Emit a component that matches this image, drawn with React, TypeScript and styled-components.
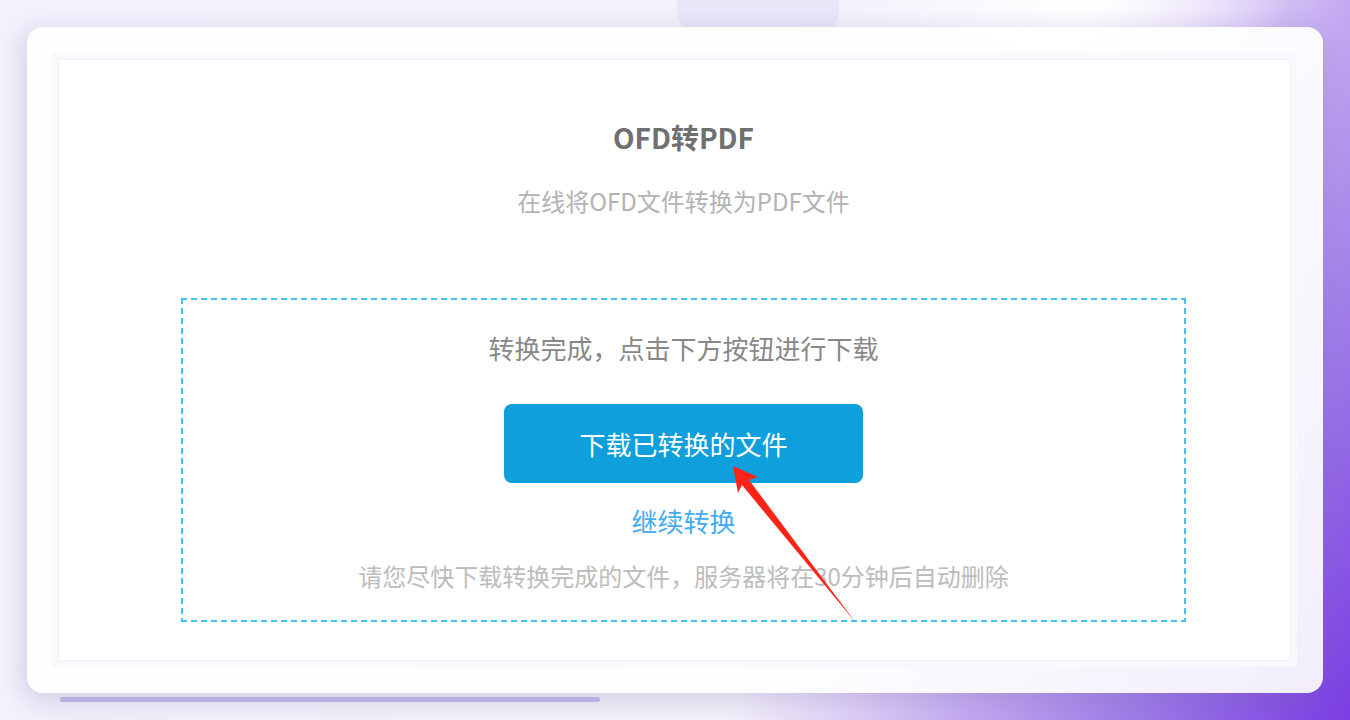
import React from "react";
import styled, { createGlobalStyle } from "styled-components";

const GlobalStyle = createGlobalStyle`
    html, body {
        margin: 0;
        padding: 0;
    }
    body {
        font-family: "Noto Sans CJK SC", "Noto Sans", sans-serif;
        overflow: hidden;
    }
`;

const dashColor = "#40c3fa";

const Page = styled.div`
    position: relative;
    width: 1350px;
    height: 720px;
    overflow: hidden;
    box-sizing: border-box;
    padding: 27px 27px 0 27px;
    background:
        radial-gradient(ellipse 220px 90px at 1070px 0px, rgba(255, 255, 255, 0.95), rgba(255, 255, 255, 0) 100%),
        linear-gradient(118deg, #f3f1fc 0%, #f4f2fb 64%, #e2d6f7 70%, #c3a9f1 78%, #a17fe9 87%, #7a3de3 100%);
`;

const TopPill = styled.div`
    position: absolute;
    left: 677px;
    top: -24px;
    width: 162px;
    height: 62px;
    border-radius: 28px;
    background: #e9e6f8;
`;

const Card = styled.div`
    position: relative;
    height: 666px;
    box-sizing: border-box;
    padding: 26px 26px 26px 25px;
    border-radius: 16px;
    background: linear-gradient(160deg, rgba(255, 255, 255, 0.96) 0%, rgba(255, 255, 255, 0.9) 100%);
    box-shadow: 0 12px 28px rgba(90, 80, 140, 0.14), -6px 0 22px rgba(120, 110, 190, 0.12);
`;

const Frame = styled.div`
    height: 100%;
    box-sizing: border-box;
    padding: 6px;
    background: #f9f8fd;
`;

const Panel = styled.div`
    height: 100%;
    box-sizing: border-box;
    border: 1px solid #f2f1f9;
    background: #ffffff;
    padding: 58px 104px 0 122px;
    display: flex;
    flex-direction: column;
    align-items: center;
`;

const Title = styled.h1`
    margin: 0;
    font-size: 28px;
    line-height: 38px;
    font-weight: 700;
    color: #707070;
`;

const Subtitle = styled.p`
    margin: 27px 0 0;
    font-size: 24px;
    line-height: 36px;
    color: #b3b3b3;
`;

const DropZone = styled.div`
    margin-top: 79px;
    width: 100%;
    height: 324px;
    box-sizing: border-box;
    padding-top: 32px;
    display: flex;
    flex-direction: column;
    align-items: center;
    background-image:
        repeating-linear-gradient(90deg, ${dashColor} 0 6px, transparent 6px 10px),
        repeating-linear-gradient(90deg, ${dashColor} 0 6px, transparent 6px 10px),
        repeating-linear-gradient(180deg, ${dashColor} 0 6px, transparent 6px 10px),
        repeating-linear-gradient(180deg, ${dashColor} 0 6px, transparent 6px 10px);
    background-size: 100% 2px, 100% 2px, 2px 100%, 2px 100%;
    background-position: left top, left bottom, left top, right top;
    background-repeat: no-repeat;
`;

const Status = styled.p`
    margin: 0;
    font-size: 26px;
    line-height: 36px;
    color: #888888;
`;

const DownloadButton = styled.button`
    margin-top: 38px;
    width: 359px;
    height: 79px;
    border: none;
    border-radius: 8px;
    background: #0e9fdc;
    color: #ffffff;
    font-family: inherit;
    font-size: 26px;
    cursor: pointer;
`;

const ContinueLink = styled.a`
    margin-top: 20px;
    font-size: 26px;
    line-height: 36px;
    color: #43acf2;
    text-decoration: none;
    cursor: pointer;
`;

const Note = styled.p`
    margin: 19px 0 0;
    font-size: 24px;
    line-height: 36px;
    color: #bcbcbc;
`;

const BottomBar = styled.div`
    margin: 4px 0 0 33px;
    width: 540px;
    height: 5px;
    border-radius: 2px;
    background: #c3bfec;
`;

const ArrowLayer = styled.svg`
    position: absolute;
    left: 0;
    top: 0;
    pointer-events: none;
`;

const Arrow = () => (
    <ArrowLayer width="1350" height="720" viewBox="0 0 1350 720">
        <polygon
            points="733,466 758,477 749,480 856,623 742,485 738,493"
            fill="#fb2416"
        />
    </ArrowLayer>
);

const App = () => {
    return (
        <Page>
            <GlobalStyle />
            <TopPill />
            <Card>
                <Frame>
                    <Panel>
                        <Title>OFD转PDF</Title>
                        <Subtitle>在线将OFD文件转换为PDF文件</Subtitle>
                        <DropZone>
                            <Status>转换完成，点击下方按钮进行下载</Status>
                            <DownloadButton>下载已转换的文件</DownloadButton>
                            <ContinueLink>继续转换</ContinueLink>
                            <Note>请您尽快下载转换完成的文件，服务器将在30分钟后自动删除</Note>
                        </DropZone>
                    </Panel>
                </Frame>
            </Card>
            <BottomBar />
            <Arrow />
        </Page>
    );
};

export default App;
